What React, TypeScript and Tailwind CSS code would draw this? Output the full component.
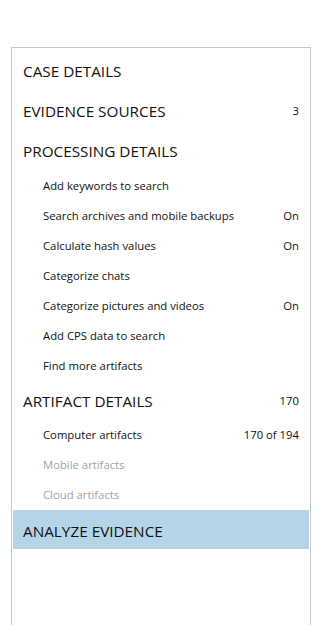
const font = { fontFamily: '"Open Sans", "Noto Sans", sans-serif' };

type Sub = { label: string; value?: string; disabled?: boolean };

const processing: Sub[] = [
  { label: "Add keywords to search" },
  { label: "Search archives and mobile backups", value: "On" },
  { label: "Calculate hash values", value: "On" },
  { label: "Categorize chats" },
  { label: "Categorize pictures and videos", value: "On" },
  { label: "Add CPS data to search" },
  { label: "Find more artifacts" },
];

const artifacts: Sub[] = [
  { label: "Computer artifacts", value: "170 of 194" },
  { label: "Mobile artifacts", disabled: true },
  { label: "Cloud artifacts", disabled: true },
];

function Header({ title, value, active }: { title: string; value?: string; active?: boolean }) {
  return (
    <div
      className={`flex items-center justify-between pl-[10px] pr-[10px] text-[15.3px] text-[#111] ${
        active ? "h-[39px] bg-[#b4d5e8] pt-[3px]" : "h-[40px] pt-[1px]"
      }`}
    >
      <span>{title}</span>
      {value && <span className="text-[11.3px]">{value}</span>}
    </div>
  );
}

function SubRow({ item }: { item: Sub }) {
  return (
    <div
      className={`flex h-[30px] items-center justify-between pl-[30px] pr-[10px] pt-[1px] text-[11.3px] ${
        item.disabled ? "text-[#a3a3a3]" : "text-[#111]"
      }`}
    >
      <span>{item.label}</span>
      {item.value && <span>{item.value}</span>}
    </div>
  );
}

export default function App() {
  return (
    <div className="h-[625px] w-[324px] overflow-hidden bg-white pl-[11px] pt-[47px]" style={font}>
      <nav className="h-[600px] w-[300px] border border-b-0 border-[#c8c8c8] px-[1px] pt-[3px]">
        <Header title="CASE DETAILS" />
        <Header title="EVIDENCE SOURCES" value="3" />
        <Header title="PROCESSING DETAILS" />
        {processing.map((p) => (
          <SubRow key={p.label} item={p} />
        ))}
        <div className="flex h-[39px] items-center justify-between pl-[10px] pr-[10px] pt-[1px] text-[15.3px] text-[#111]">
          <span>ARTIFACT DETAILS</span>
          <span className="text-[11.3px]">170</span>
        </div>
        {artifacts.map((a) => (
          <SubRow key={a.label} item={a} />
        ))}
        <Header title="ANALYZE EVIDENCE" active />
      </nav>
    </div>
  );
}
